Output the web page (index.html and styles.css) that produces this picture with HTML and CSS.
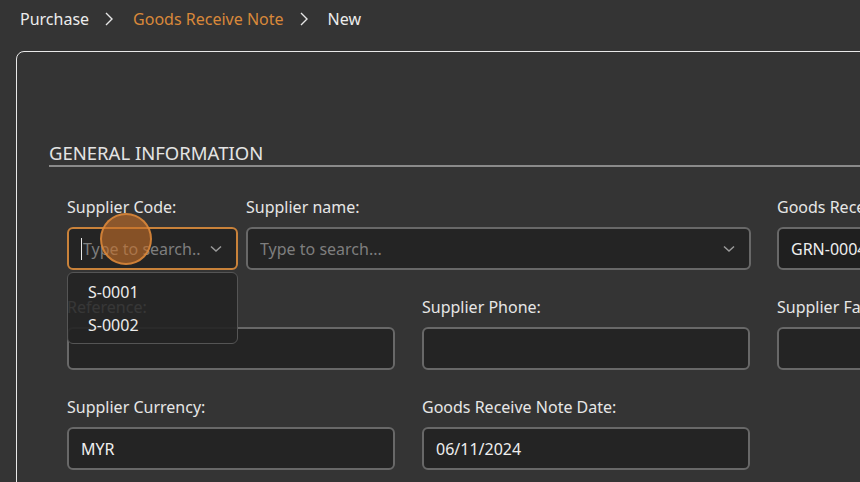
FILE: index.html
```html
<!DOCTYPE html>
<html>
<head>
<meta charset="utf-8">
<link rel="stylesheet" href="styles.css">
</head>
<body>
<nav class="crumbs">
  <span class="crumb">Purchase</span>
  <svg class="sep" width="8" height="14" viewBox="0 0 8 14"><polyline points="1,1 7,7 1,13" fill="none" stroke="#e6e6e6" stroke-width="1.4"/></svg>
  <span class="crumb active">Goods Receive Note</span>
  <svg class="sep" width="8" height="14" viewBox="0 0 8 14"><polyline points="1,1 7,7 1,13" fill="none" stroke="#e6e6e6" stroke-width="1.4"/></svg>
  <span class="crumb">New</span>
</nav>
<main class="card">
  <h2 class="section-title">GENERAL INFORMATION</h2>
  <div class="grid">
    <div class="span2 pair">
      <div class="field code">
        <label class="label">Supplier Code:</label>
        <div class="box focus">
          <span class="caret"></span>
          <span class="ph">Type to search..</span>
          <svg class="chev" width="12" height="8" viewBox="0 0 12 8"><polyline points="1,1.5 6,6 11,1.5" fill="none" stroke="#9a9a9a" stroke-width="1.5"/></svg>
        </div>
        <div class="menu">
          <div class="opt">S-0001</div>
          <div class="opt">S-0002</div>
        </div>
        <div class="click"></div>
      </div>
      <div class="field grow">
        <label class="label">Supplier name:</label>
        <div class="box">
          <span class="ph">Type to search...</span>
          <svg class="chev" width="12" height="8" viewBox="0 0 12 8"><polyline points="1,1.5 6,6 11,1.5" fill="none" stroke="#9a9a9a" stroke-width="1.5"/></svg>
        </div>
      </div>
    </div>
    <div class="field">
      <label class="label">Goods Receive Note No:</label>
      <div class="box dark"><span class="val">GRN-0004</span></div>
    </div>
    <div class="field">
      <label class="label">Reference:</label>
      <div class="box"></div>
    </div>
    <div class="field">
      <label class="label">Supplier Phone:</label>
      <div class="box"></div>
    </div>
    <div class="field">
      <label class="label">Supplier Fax:</label>
      <div class="box"></div>
    </div>
    <div class="field">
      <label class="label">Supplier Currency:</label>
      <div class="box"><span class="val">MYR</span></div>
    </div>
    <div class="field">
      <label class="label">Goods Receive Note Date:</label>
      <div class="box"><span class="val">06/11/2024</span></div>
    </div>
    <div class="field"></div>
  </div>
</main>
</body>
</html>
```

FILE: styles.css
```css
html, body {
  margin: 0;
  padding: 0;
  background: #343434;
  overflow: hidden;
  width: 860px;
  height: 482px;
}
body {
  font-family: "Noto Sans", "Open Sans", sans-serif;
  color: #e8e8e8;
  font-size: 16px;
}
.crumbs {
  display: flex;
  align-items: center;
  height: 38px;
  padding-left: 20px;
  white-space: nowrap;
}
.crumb {
  color: #ececec;
  line-height: 38px;
}
.crumb.active {
  color: #d9883a;
}
.sep {
  margin: 0 20px 0 16px;
  flex: none;
}
.card {
  margin: 13px 0 0 16px;
  width: 1100px;
  height: 600px;
  border: 1px solid #e8e8e8;
  border-radius: 8px 0 0 0;
  padding: 0 0 0 32px;
  box-sizing: border-box;
}
.section-title {
  margin: 89px 0 0 0;
  font-size: 18.5px;
  font-weight: 400;
  line-height: 24px;
  color: #e4e4e4;
  border-bottom: 2px solid #8a8a8a;
}
.grid {
  display: grid;
  grid-template-columns: 328px 328px 328px;
  column-gap: 27px;
  row-gap: 26px;
  padding: 29px 0 0 18px;
}
.span2 {
  grid-column: span 2;
}
.pair {
  display: flex;
  gap: 8px;
  margin-right: -1px;
}
.field {
  display: flex;
  flex-direction: column;
  gap: 9px;
  position: relative;
}
.field.code {
  width: 171px;
  flex: none;
}
.field.grow {
  flex: 1;
}
.label {
  line-height: 22px;
  height: 22px;
  color: #e6e6e6;
  white-space: nowrap;
}
.box {
  height: 43px;
  box-sizing: border-box;
  border: 2px solid #686868;
  border-radius: 6px;
  background: #242424;
  display: flex;
  align-items: center;
  padding: 0 12px;
  position: relative;
  overflow: hidden;
  white-space: nowrap;
}
.box.dark {
  background: #1f1f1f;
}
.box.focus {
  border-color: #c9823a;
}
.caret {
  width: 1px;
  height: 22px;
  background: #e8e8e8;
  margin-right: 1px;
  flex: none;
}
.ph {
  color: #7e7e7e;
  flex: 1;
  overflow: hidden;
}
.val {
  color: #eeeeee;
}
.chev {
  flex: none;
  margin-left: 8px;
  margin-right: 2px;
}
.menu {
  position: absolute;
  left: 0;
  top: 76px;
  width: 171px;
  height: 72px;
  box-sizing: border-box;
  background: rgba(36, 36, 36, 0.9);
  border: 1px solid #555;
  border-radius: 6px;
  padding: 3px 0 0 20px;
  z-index: 5;
}
.opt {
  line-height: 33px;
  color: #ececec;
}
.click {
  position: absolute;
  left: 33px;
  top: 17px;
  width: 52px;
  height: 52px;
  box-sizing: border-box;
  border-radius: 50%;
  background: rgba(200, 112, 40, 0.6);
  border: 2px solid rgba(225, 140, 60, 0.8);
  z-index: 6;
}
```
